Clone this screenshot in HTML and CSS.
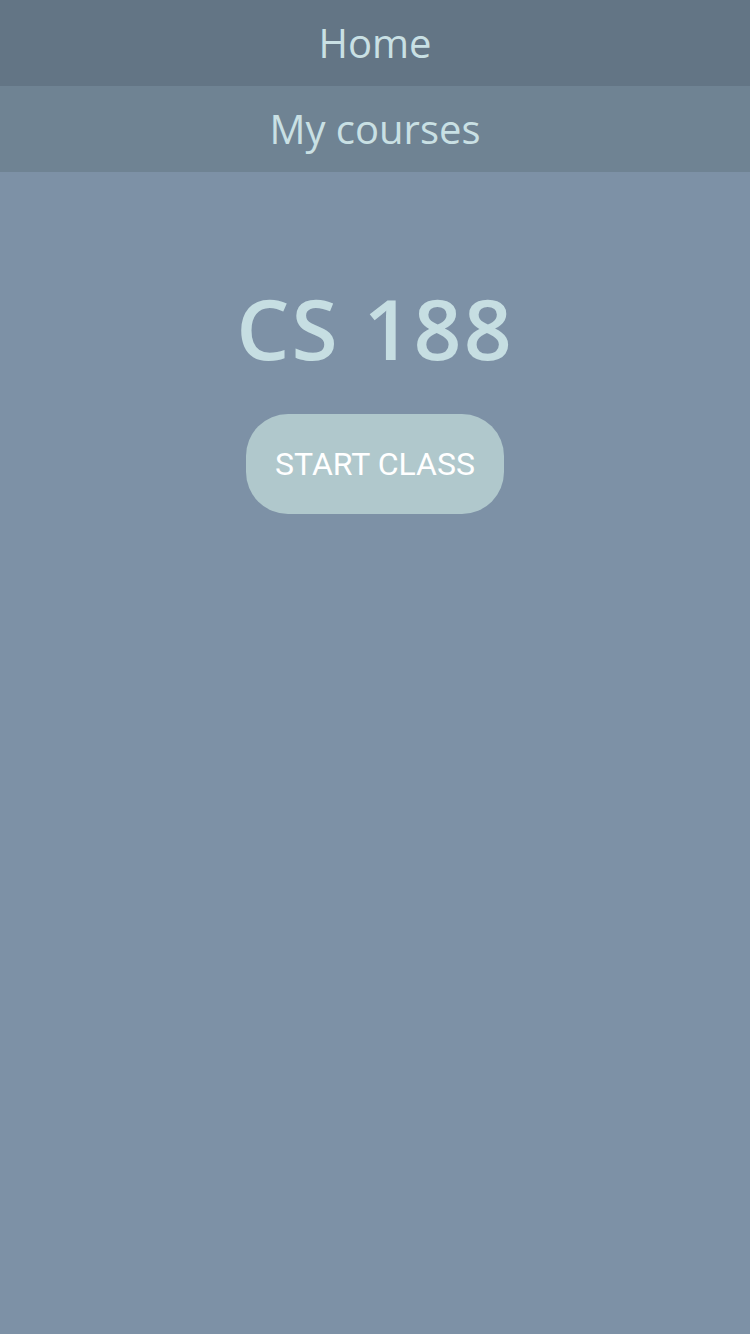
FILE: index.html
```html
<!DOCTYPE html>
<html>
<head>
<meta charset="utf-8">
<link rel="stylesheet" href="styles.css">
</head>
<body>
<nav class="nav">
  <div class="nav-item nav-home">Home</div>
  <div class="nav-item nav-courses">My courses</div>
</nav>
<main class="main">
  <h1 class="title">CS 188</h1>
  <button class="start">START CLASS</button>
</main>
</body>
</html>
```
FILE: styles.css
```css
html, body {
  margin: 0;
  padding: 0;
  height: 100%;
}
body {
  background: #7d91a6;
  font-family: "Open Sans", sans-serif;
}
.nav {
  display: flex;
  flex-direction: column;
}
.nav-item {
  height: 86px;
  box-sizing: border-box;
  padding-bottom: 2px;
  display: flex;
  align-items: center;
  justify-content: center;
  font-size: 40px;
  color: #c9e0e4;
}
.nav-home {
  background: #637585;
}
.nav-courses {
  background: #6f8393;
}
.main {
  display: flex;
  flex-direction: column;
  align-items: center;
  padding-top: 106px;
}
.title {
  margin: 0;
  font-size: 84px;
  font-weight: 600;
  line-height: 100px;
  color: #c6dee2;
  letter-spacing: 2px;
}
.start {
  margin-top: 36px;
  width: 258px;
  height: 100px;
  border: none;
  border-radius: 42px;
  background: #b0c8cc;
  color: #ffffff;
  font-family: Roboto, sans-serif;
  font-size: 32px;
  padding: 0;
}
```
